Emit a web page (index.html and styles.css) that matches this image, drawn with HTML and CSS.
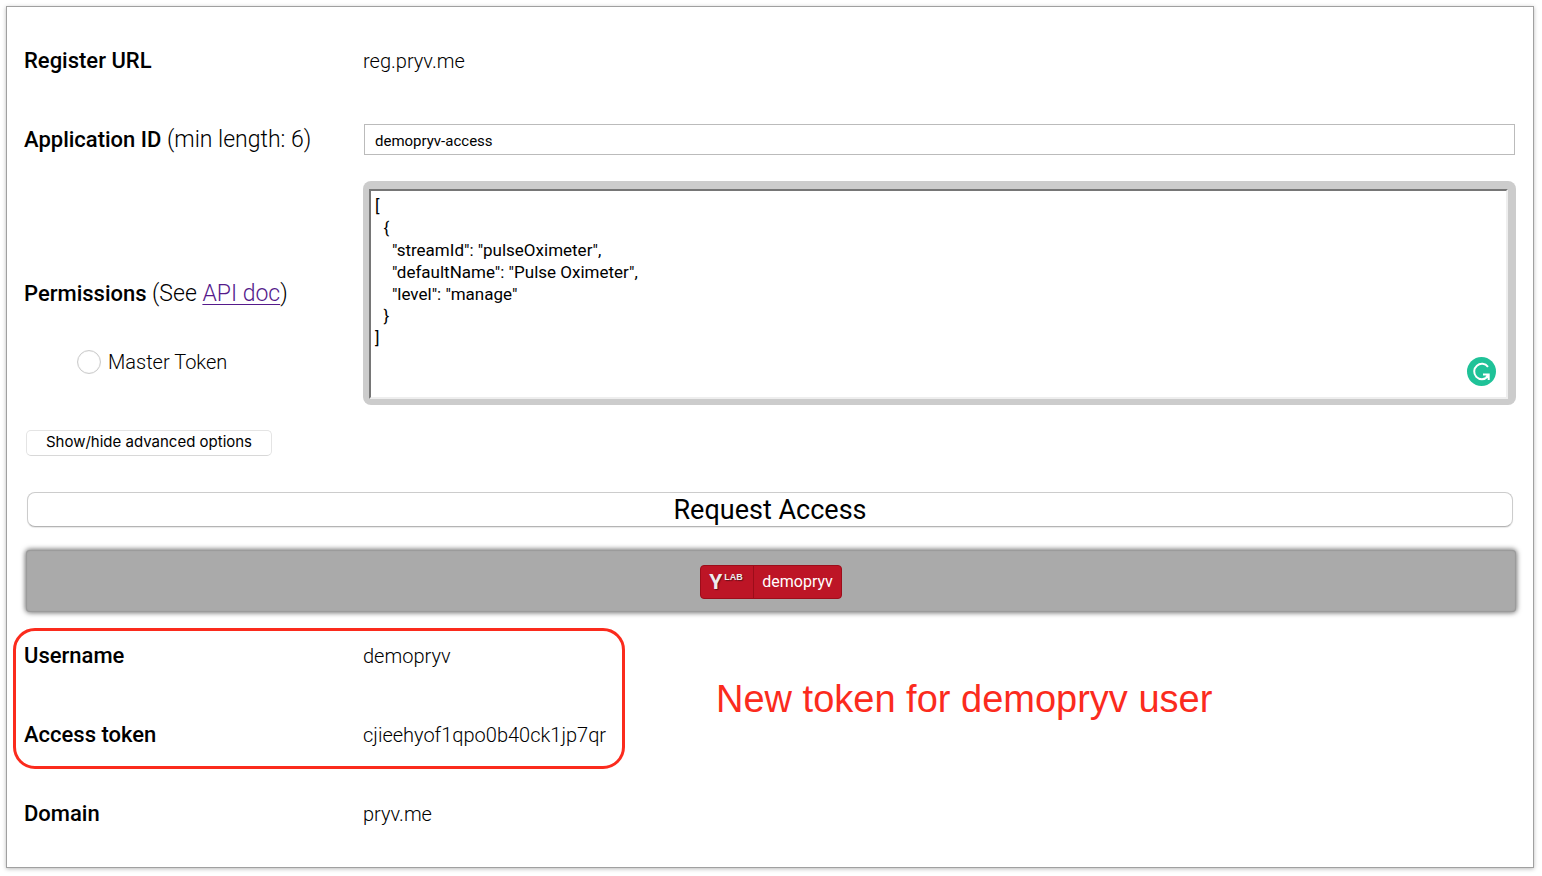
FILE: index.html
```html
<!DOCTYPE html>
<html lang="en">
<head>
<meta charset="utf-8">
<title>Access token generator</title>
<link rel="stylesheet" href="styles.css">
</head>
<body>
<main class="panel">
  <div class="row">
    <span class="label">Register URL</span>
    <span class="value">reg.pryv.me</span>
  </div>
  <div class="row">
    <label class="label" for="app-id">Application ID <span class="hint">(min length: 6)</span></label>
    <input class="text-input" id="app-id" type="text" value="demopryv-access">
  </div>
  <div class="row permissions">
    <div class="permissions-side">
      <div class="label"><label for="permissions">Permissions</label> <span class="hint">(See <a class="doc-link" href="#">API doc</a>)</span></div>
      <label class="master"><input class="radio" type="radio" name="master">Master Token</label>
    </div>
    <div class="editor">
      <textarea class="editor-text" id="permissions" spellcheck="false">[
  {
    "streamId": "pulseOximeter",
    "defaultName": "Pulse Oximeter",
    "level": "manage"
  }
]</textarea>
      <svg class="grammar-badge" viewBox="0 0 29 29" aria-hidden="true">
        <circle cx="14.500" cy="14.500" r="14.500" fill="#1fc298"/>
        <path d="M21 9.800A7.700 7.700 0 1 0 20.500 19.800M16 17.500h5.700v5.500M21.500 17.700l-2.500 3" fill="none" stroke="#fff" stroke-width="2"/>
      </svg>
    </div>
  </div>
  <button class="button advanced" type="button">Show/hide advanced options</button>
  <button class="button request" type="button">Request Access</button>
  <div class="login-bar">
    <button class="login" type="button">
      <span class="login-brand"><span class="brand-y">Y</span><span class="brand-lab">LAB</span></span>
      <span class="login-user">demopryv</span>
    </button>
  </div>
  <section class="result">
    <div class="row">
      <span class="label">Username</span>
      <span class="value">demopryv</span>
    </div>
    <div class="row">
      <span class="label">Access token</span>
      <span class="value">cjieehyof1qpo0b40ck1jp7qr</span>
    </div>
    <div class="highlight"></div>
    <p class="note">New token for demopryv user</p>
  </section>
  <div class="row">
    <span class="label">Domain</span>
    <span class="value">pryv.me</span>
  </div>
</main>
</body>
</html>
```
FILE: styles.css
```css
* { box-sizing: border-box; }
body {
  margin: 0;
  padding: 7px 9px 9px 7px;
  background: #fff;
  color: #000;
  font-family: Roboto, "Liberation Sans", sans-serif;
}
.panel {
  display: flex;
  flex-direction: column;
  padding: 14px 17px;
  background: #fff;
  box-shadow: 0 0 0 1px #a0a0a0, 0 1px 4px 1px #bbb;
}
.row {
  display: grid;
  grid-template-columns: 339px 1fr;
  align-items: center;
  min-height: 79px;
}
.label { font-size: 22px; font-weight: 500; line-height: 28px; }
.hint { font-size: 23px; font-weight: 300; }
.value { font-size: 20px; font-weight: 300; line-height: 28px; }
.text-input {
  width: calc(100% - 2px);
  height: 31px;
  margin-left: 1px;
  padding: 2px 10px 0;
  border: 1px solid #bbb;
  background: #fff;
  color: #000;
  font: 400 15px Roboto, sans-serif;
}
.permissions { align-items: stretch; margin-top: 2px; }
.permissions-side {
  display: flex;
  flex-direction: column;
  gap: 40px;
  padding-top: 99px;
}
.doc-link { color: #551a8b; text-underline-offset: 3px; text-decoration-thickness: 1px; }
.master {
  display: flex;
  align-items: center;
  gap: 7px;
  padding-left: 53px;
  font-size: 20px;
  font-weight: 300;
  line-height: 28px;
}
.radio {
  appearance: none;
  width: 24px;
  height: 24px;
  margin: 0;
  border: 1px solid #ccc;
  border-radius: 50%;
  background: #fff;
  box-shadow: inset 0 0 1px #ccc;
}
.editor {
  position: relative;
  display: flex;
  height: 224px;
  padding: 8px 8px 6px 6px;
  border-radius: 8px;
  background: #ccc;
}
.editor-text {
  flex: 1;
  padding: 4px;
  border: 2px solid;
  border-color: #767676 #eee #eee #767676;
  background: #fff;
  color: #000;
  font: 400 17px/22px Roboto, sans-serif;
  resize: none;
}
.grammar-badge { position: absolute; right: 20px; bottom: 19px; width: 29px; height: 29px; }
.button {
  padding: 0;
  background: #fff;
  color: #000;
  font-family: Roboto, sans-serif;
}
.advanced {
  width: 246px;
  height: 26px;
  margin: 25px 0 0 2px;
  padding-bottom: 2px;
  border: 1px solid #e4e4e4;
  border-bottom-color: #d8d8d8;
  border-radius: 5px;
  font-family: Inter, sans-serif;
  font-size: 15px;
  line-height: 20px;
}
.request {
  height: 35px;
  margin: 36px 3px 0;
  border: 1px solid #ccc;
  border-bottom-color: #b4b4b4;
  border-radius: 8px;
  box-shadow: 0 1px 1px #e8e8e8;
  font-size: 27px;
  line-height: 30px;
}
.login-bar {
  display: flex;
  justify-content: center;
  align-items: center;
  height: 62px;
  margin: 23px 0 0 2px;
  padding-top: 2px;
  border-radius: 4px;
  background: #aaa;
  box-shadow: 0 0 5px 1px #777, inset 0 0 1px 1px #999;
}
.login {
  display: flex;
  height: 34px;
  padding: 0;
  border: 1px solid #9c0d1a;
  border-radius: 4px;
  background: #bd1526;
  color: #fff;
  font: 400 16px Roboto, sans-serif;
}
.login-brand {
  display: flex;
  align-items: flex-start;
  gap: 2px;
  width: 53px;
  height: 32px;
  padding: 6px 0 0 8px;
  border-right: 1px solid #9c0d1a;
  color: #eee;
  text-shadow: 1px 1px 1px #64101a;
}
.brand-y { font: 700 21px/21px Roboto, sans-serif; }
.brand-lab { font: 700 9px/11px "Liberation Sans", sans-serif; }
.login-user { padding: 0 8px; line-height: 32px; }
.result { position: relative; margin-top: 4px; }
.highlight {
  position: absolute;
  top: 12px;
  left: -11px;
  width: 612px;
  height: 141px;
  border: 3px solid #fb2b1d;
  border-radius: 22px;
}
.note {
  position: absolute;
  top: 60px;
  left: 692px;
  margin: 0;
  color: #fb2b1d;
  font: 400 38px/46px "Liberation Sans", sans-serif;
  white-space: nowrap;
}
```
